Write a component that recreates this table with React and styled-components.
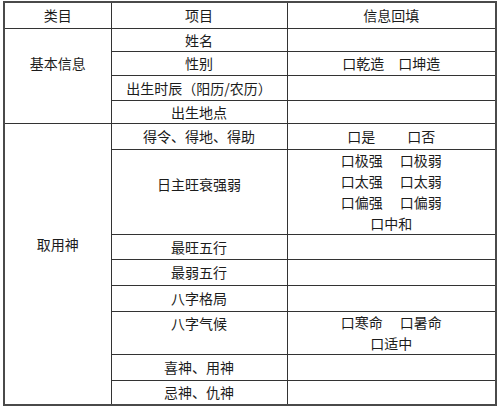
import React from "react";
import styled, { createGlobalStyle } from "styled-components";

const GlobalStyle = createGlobalStyle`
  html, body {
    margin: 0;
    padding: 0;
    background: #ffffff;
  }
  body {
    font-family: "Noto Sans CJK SC", "Noto Sans", sans-serif;
    color: #1c1c1c;
  }
`;

const Page = styled.div`
  padding: 1px 5px 0 3px;
`;

const Table = styled.table`
  width: 492px;
  table-layout: fixed;
  border-collapse: collapse;
  border: 2px solid #4a4a4a;
  font-size: 14px;
`;

const Col = styled.col`
  width: ${(p) => p.$w}px;
`;

const Cell = styled.td`
  height: ${(p) => p.$h}px;
  padding: ${(p) => (p.$pt != null ? `${p.$pt}px 0 0` : "0")};
  vertical-align: ${(p) => (p.$pt != null ? "top" : "middle")};
  border: 1px solid #333333;
  text-align: center;
  line-height: 20px;
  white-space: nowrap;
  box-sizing: border-box;
`;

const Options = styled.div`
  display: flex;
  flex-direction: column;
  align-items: center;
`;

const OptionRow = styled.div`
  display: flex;
  justify-content: center;
  gap: ${(p) => p.$gap || 17}px;
  line-height: 21px;
`;

const Box = ({ children }) => <span>口{children}</span>;

const Line = ({ items, gap }) => (
  <OptionRow $gap={gap}>
    {items.map((t) => (
      <Box key={t}>{t}</Box>
    ))}
  </OptionRow>
);

export default function App() {
  return (
    <Page>
      <GlobalStyle />
      <Table>
        <colgroup>
          <Col $w={107} />
          <Col $w={176} />
          <Col $w={209} />
        </colgroup>
        <tbody>
          <tr>
            <Cell $h={26}>类目</Cell>
            <Cell $h={26}>项目</Cell>
            <Cell $h={26}>信息回填</Cell>
          </tr>
          <tr>
            <Cell rowSpan={4} $pt={24}>
              基本信息
            </Cell>
            <Cell $h={23}>姓名</Cell>
            <Cell $h={23} />
          </tr>
          <tr>
            <Cell $h={24}>性别</Cell>
            <Cell $h={24}>
              <Line items={["乾造", "坤造"]} gap={14} />
            </Cell>
          </tr>
          <tr>
            <Cell $h={25}>出生时辰（阳历/农历）</Cell>
            <Cell $h={25} />
          </tr>
          <tr>
            <Cell $h={23}>出生地点</Cell>
            <Cell $h={23} />
          </tr>
          <tr>
            <Cell rowSpan={8} $pt={110}>
              取用神
            </Cell>
            <Cell $h={26}>得令、得地、得助</Cell>
            <Cell $h={26}>
              <Line items={["是", "否"]} gap={32} />
            </Cell>
          </tr>
          <tr>
            <Cell $h={85} $pt={24}>
              日主旺衰强弱
            </Cell>
            <Cell $h={85} $pt={0}>
              <Options>
                <Line items={["极强", "极弱"]} />
                <Line items={["太强", "太弱"]} />
                <Line items={["偏强", "偏弱"]} />
                <Line items={["中和"]} />
              </Options>
            </Cell>
          </tr>
          <tr>
            <Cell $h={25}>最旺五行</Cell>
            <Cell $h={25} />
          </tr>
          <tr>
            <Cell $h={26}>最弱五行</Cell>
            <Cell $h={26} />
          </tr>
          <tr>
            <Cell $h={26}>八字格局</Cell>
            <Cell $h={26} />
          </tr>
          <tr>
            <Cell $h={43} $pt={1}>
              八字气候
            </Cell>
            <Cell $h={43} $pt={0}>
              <Options>
                <Line items={["寒命", "暑命"]} />
                <Line items={["适中"]} />
              </Options>
            </Cell>
          </tr>
          <tr>
            <Cell $h={26}>喜神、用神</Cell>
            <Cell $h={26} />
          </tr>
          <tr>
            <Cell $h={25}>忌神、仇神</Cell>
            <Cell $h={25} />
          </tr>
        </tbody>
      </Table>
    </Page>
  );
}
